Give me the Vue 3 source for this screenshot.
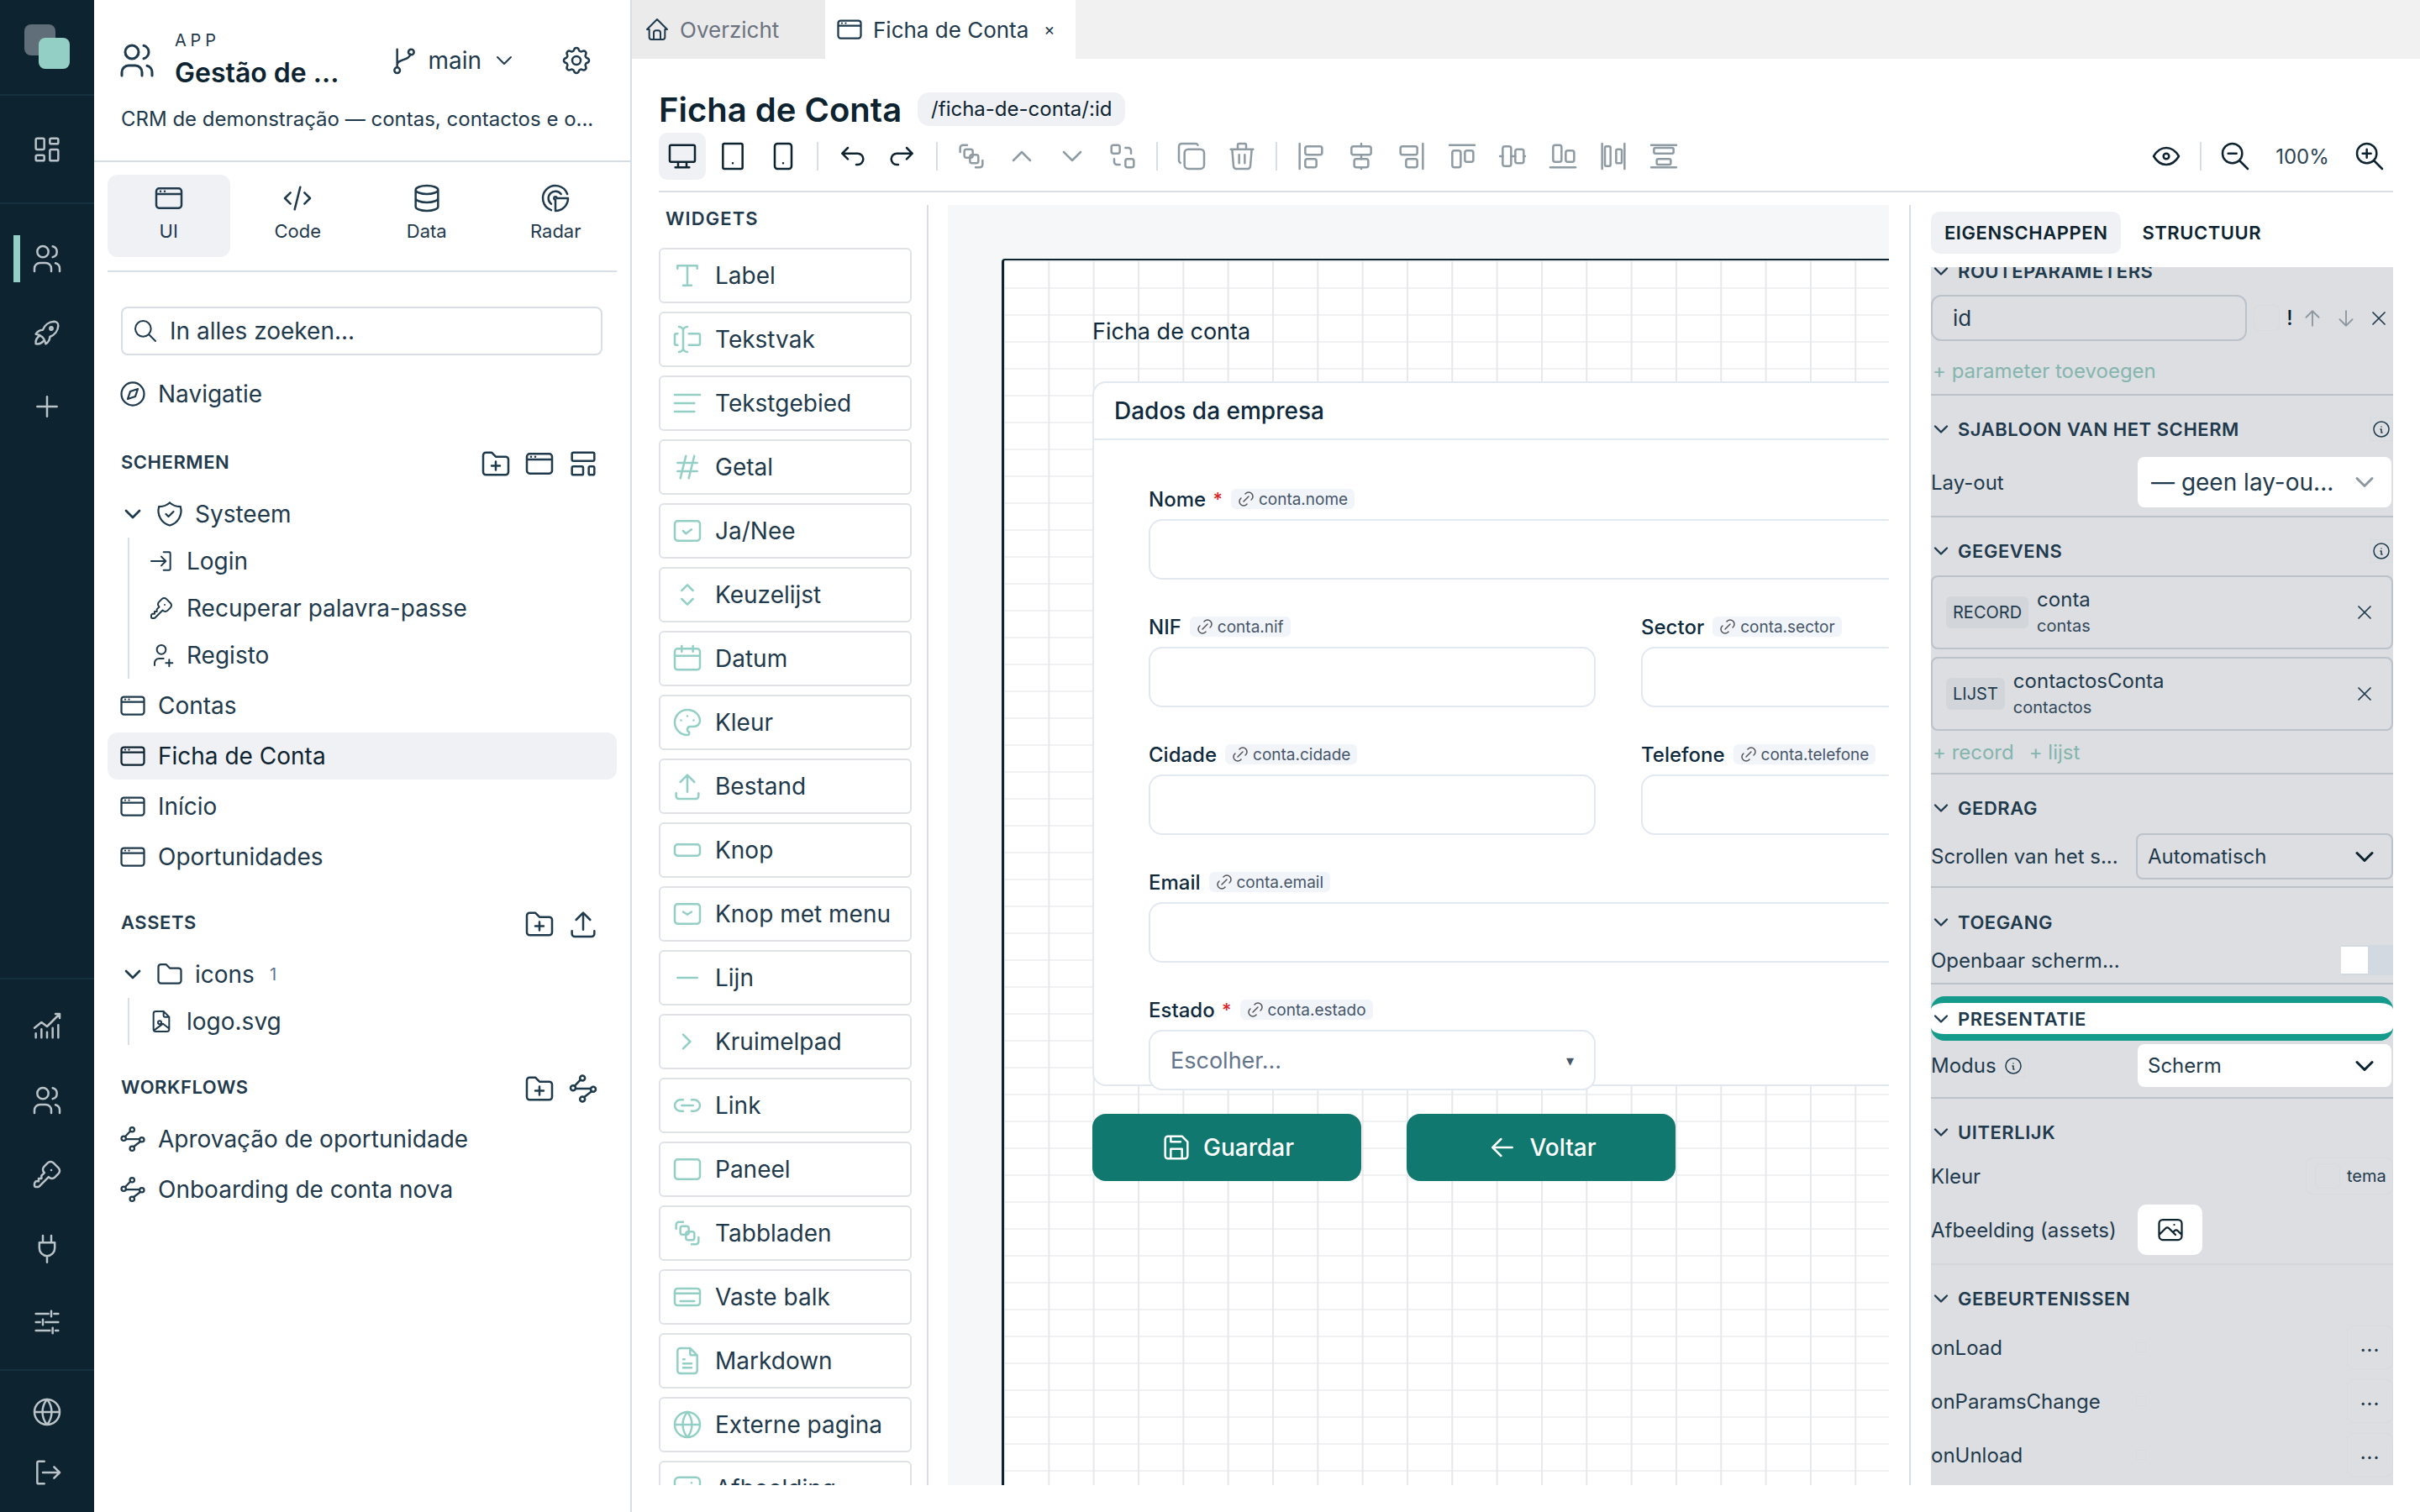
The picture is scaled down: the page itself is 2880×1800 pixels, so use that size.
<script setup>
import { h } from 'vue';

// inner markup of the icons, all on a 24x24 box
const icons = {
  dash: '<path d="M5 4h4a1 1 0 0 1 1 1v6a1 1 0 0 1-1 1H5a1 1 0 0 1-1-1V5a1 1 0 0 1 1-1M5 16h4a1 1 0 0 1 1 1v2a1 1 0 0 1-1 1H5a1 1 0 0 1-1-1v-2a1 1 0 0 1 1-1M15 12h4a1 1 0 0 1 1 1v6a1 1 0 0 1-1 1h-4a1 1 0 0 1-1-1v-6a1 1 0 0 1 1-1M15 4h4a1 1 0 0 1 1 1v2a1 1 0 0 1-1 1h-4a1 1 0 0 1-1-1V5a1 1 0 0 1 1-1"/>',
  users: '<path d="M5 7a4 4 0 1 0 8 0a4 4 0 1 0-8 0M3 21v-2a4 4 0 0 1 4-4h4a4 4 0 0 1 4 4v2M16 3.13a4 4 0 0 1 0 7.75M21 21v-2a4 4 0 0 0-3-3.85"/>',
  rocket: '<path d="M4 13a8 8 0 0 1 7 7a6 6 0 0 0 3-5a9 9 0 0 0 6-8a3 3 0 0 0-3-3a9 9 0 0 0-8 6a6 6 0 0 0-5 3M7 14a6 6 0 0 0-3 6a6 6 0 0 0 6-3M14 9a1 1 0 1 0 2 0a1 1 0 1 0-2 0"/>',
  plus: '<path d="M12 5v14M5 12h14"/>',
  chart: '<path d="M3 13l5-4 4 3 9-9M18 3h3v3M4 20v-3M8 20v-6M12 20v-4M16 20v-7M20 20v-9"/>',
  key: '<path d="M16.555 3.843l3.602 3.602a2.877 2.877 0 0 1 0 4.069l-2.643 2.643a2.877 2.877 0 0 1-4.069 0l-.301-.301l-6.558 6.558a2 2 0 0 1-1.239.578l-.175.008h-1.172a1 1 0 0 1-.993-.883l-.007-.117v-1.172a2 2 0 0 1 .467-1.284l.119-.13l.414-.414h2v-2h2v-2l2.144-2.144l-.301-.301a2.877 2.877 0 0 1 0-4.069l2.643-2.643a2.877 2.877 0 0 1 4.069 0M15 9h.01"/>',
  plug: '<path d="M9 3v5M15 3v5M6.5 8h11v4a5.5 5.5 0 0 1-11 0zM12 17.5V22"/>',
  sliders: '<path d="M4 6h9M17 6h3M15 4v4M4 12h3M11 12h9M9 10v4M4 18h10M18 18h2M16 16v4"/>',
  globe: '<path d="M3 12a9 9 0 1 0 18 0a9 9 0 1 0-18 0M3 12h18M12 3a14 14 0 0 0 0 18a14 14 0 0 0 0-18"/>',
  logout: '<path d="M10 4H6a1 1 0 0 0-1 1v14a1 1 0 0 0 1 1h4M9 12h12M17 8l4 4-4 4"/>',
  branch: '<path d="M5 19a2 2 0 1 0 4 0a2 2 0 1 0-4 0M15 6a2 2 0 1 0 4 0a2 2 0 1 0-4 0M7 17V4M7 15c0-4 9-3 9.4-7.5"/>',
  gear: '<path d="M10.325 4.317c.426-1.756 2.924-1.756 3.35 0a1.724 1.724 0 0 0 2.573 1.066c1.543-.94 3.31.826 2.37 2.37a1.724 1.724 0 0 0 1.065 2.572c1.756.426 1.756 2.924 0 3.35a1.724 1.724 0 0 0-1.066 2.573c.94 1.543-.826 3.31-2.37 2.37a1.724 1.724 0 0 0-2.572 1.065c-.426 1.756-2.924 1.756-3.35 0a1.724 1.724 0 0 0-2.573-1.066c-1.543.94-3.31-.826-2.37-2.37a1.724 1.724 0 0 0-1.065-2.572c-1.756-.426-1.756-2.924 0-3.35a1.724 1.724 0 0 0 1.066-2.573c-.94-1.543.826-3.31 2.37-2.37c1 .608 2.296.07 2.572-1.065zM9 12a3 3 0 1 0 6 0a3 3 0 0 0-6 0"/>',
  win: '<path d="M3 7a2 2 0 0 1 2-2h14a2 2 0 0 1 2 2v10a2 2 0 0 1-2 2H5a2 2 0 0 1-2-2zM3 9h18M6 7h.01M9 7h.01"/>',
  code: '<path d="M7 8l-4 4 4 4M17 8l4 4-4 4M14 4l-4 16"/>',
  data: '<path d="M4 6a8 3 0 1 0 16 0a8 3 0 1 0-16 0M4 6v6a8 3 0 0 0 16 0V6M4 12v6a8 3 0 0 0 16 0v-6"/>',
  radar: '<path d="M21 12h-8a1 1 0 1 0-1 1v8a9 9 0 0 0 9-9M16 9a5 5 0 1 0-7 7M20.486 9a9 9 0 1 0-11.482 11.495"/>',
  search: '<path d="M3 10a7 7 0 1 0 14 0a7 7 0 1 0-14 0M21 21l-6-6"/>',
  compass: '<path d="M8 16l2-6 6-2-2 6zM3 12a9 9 0 1 0 18 0a9 9 0 1 0-18 0"/>',
  folderPlus: '<path d="M5 4h4l3 3h7a2 2 0 0 1 2 2v9a2 2 0 0 1-2 2H5a2 2 0 0 1-2-2V6a2 2 0 0 1 2-2M12 10.5v6M9 13.5h6"/>',
  layout: '<path d="M5 4h14a1 1 0 0 1 1 1v4a1 1 0 0 1-1 1H5a1 1 0 0 1-1-1V5a1 1 0 0 1 1-1M5 14h6a1 1 0 0 1 1 1v4a1 1 0 0 1-1 1H5a1 1 0 0 1-1-1v-4a1 1 0 0 1 1-1M17 14h2a1 1 0 0 1 1 1v4a1 1 0 0 1-1 1h-2a1 1 0 0 1-1-1v-4a1 1 0 0 1 1-1"/>',
  down: '<path d="M6 9l6 6 6-6"/>',
  up: '<path d="M6 15l6-6 6 6"/>',
  right: '<path d="M9 7l5 5-5 5"/>',
  shield: '<path d="M12 3a12 12 0 0 0 8.5 3a12 12 0 0 1-8.5 15a12 12 0 0 1-8.5-15a12 12 0 0 0 8.5-3M9 12l2 2 4-4"/>',
  login: '<path d="M3 12h13M12 8l4 4-4 4M14 4h5a1 1 0 0 1 1 1v14a1 1 0 0 1-1 1h-5"/>',
  userPlus: '<path d="M8 7a4 4 0 1 0 8 0a4 4 0 0 0-8 0M16 19h6M19 16v6M6 21v-2a4 4 0 0 1 4-4h4"/>',
  folder: '<path d="M5 4h4l3 3h7a2 2 0 0 1 2 2v8a2 2 0 0 1-2 2H5a2 2 0 0 1-2-2V6a2 2 0 0 1 2-2"/>',
  upload: '<path d="M4 17v2a2 2 0 0 0 2 2h12a2 2 0 0 0 2-2v-2M7 9l5-5 5 5M12 4v12"/>',
  fileImg: '<path d="M14 3v4a1 1 0 0 0 1 1h4M17 21H7a2 2 0 0 1-2-2V5a2 2 0 0 1 2-2h7l5 5v11a2 2 0 0 1-2 2M9 13a1.5 1.5 0 1 0 3 0a1.5 1.5 0 1 0-3 0M5.5 20l8-6 5 4"/>',
  flow: '<circle cx="11.500" cy="4.500" r="1.800"/><circle cx="4.800" cy="11.500" r="1.800"/><circle cx="19.200" cy="12.500" r="1.800"/><circle cx="11.500" cy="19.500" r="1.800"/><path d="M10 5.800L6 10M6.600 12h10.800M18 14l-5.200 4"/>',
  home: '<path d="M5 12H3l9-9 9 9h-2M5 12v7a2 2 0 0 0 2 2h10a2 2 0 0 0 2-2v-7M9 21v-6a2 2 0 0 1 2-2h2a2 2 0 0 1 2 2v6"/>',
  desktop: '<path d="M3 5a1 1 0 0 1 1-1h16a1 1 0 0 1 1 1v10a1 1 0 0 1-1 1H4a1 1 0 0 1-1-1zM7 20h10M9 16v4M15 16v4"/>',
  tablet: '<path d="M5 4a1 1 0 0 1 1-1h12a1 1 0 0 1 1 1v16a1 1 0 0 1-1 1H6a1 1 0 0 1-1-1zM12 17h.01"/>',
  phone: '<path d="M6 5a2 2 0 0 1 2-2h8a2 2 0 0 1 2 2v14a2 2 0 0 1-2 2H8a2 2 0 0 1-2-2zM12 17h.01"/>',
  undo: '<path d="M9 14l-4-4 4-4M5 10h11a4 4 0 1 1 0 8h-1"/>',
  redo: '<path d="M15 14l4-4-4-4M19 10H8a4 4 0 1 0 0 8h1"/>',
  group: '<path d="M4 9V6a2 2 0 0 1 2-2h3M20 15v3a2 2 0 0 1-2 2h-3"/><rect x="7" y="7" width="6" height="6" rx="1.500"/><rect x="11" y="11" width="6" height="6" rx="1.500"/>',
  ungroup: '<rect x="4" y="4" width="6" height="6" rx="1.500"/><rect x="14" y="14" width="6" height="6" rx="1.500"/><path d="M14 6h2a2 2 0 0 1 2 2v2M10 18H8a2 2 0 0 1-2-2v-2"/>',
  copy: '<path d="M7 9.667A2.667 2.667 0 0 1 9.667 7h8.666A2.667 2.667 0 0 1 21 9.667v8.666A2.667 2.667 0 0 1 18.333 21H9.667A2.667 2.667 0 0 1 7 18.333zM4.012 16.737A2.005 2.005 0 0 1 3 15V5c0-1.100.9-2 2-2h10c.75 0 1.158.385 1.500 1"/>',
  trash: '<path d="M4 7h16M10 11v6M14 11v6M5 7l1 12a2 2 0 0 0 2 2h8a2 2 0 0 0 2-2l1-12M9 7V4a1 1 0 0 1 1-1h4a1 1 0 0 1 1 1v3"/>',
  alL: '<path d="M4 3v18"/><rect x="8" y="5" width="12" height="6" rx="1.500"/><rect x="8" y="14" width="8" height="6" rx="1.500"/>',
  alC: '<path d="M12 3v2M12 11v3M12 20v1"/><rect x="5" y="5" width="14" height="6" rx="1.500"/><rect x="7" y="14" width="10" height="6" rx="1.500"/>',
  alR: '<path d="M20 3v18"/><rect x="4" y="5" width="12" height="6" rx="1.500"/><rect x="8" y="14" width="8" height="6" rx="1.500"/>',
  alT: '<path d="M3 4h18"/><rect x="5" y="8" width="6" height="12" rx="1.500"/><rect x="14" y="8" width="6" height="8" rx="1.500"/>',
  alM: '<path d="M3 12h2M11 12h3M20 12h1"/><rect x="5" y="5" width="6" height="14" rx="1.500"/><rect x="14" y="7" width="6" height="10" rx="1.500"/>',
  alB: '<path d="M3 20h18"/><rect x="5" y="4" width="6" height="12" rx="1.500"/><rect x="14" y="8" width="6" height="8" rx="1.500"/>',
  diH: '<path d="M4 3v18M20 3v18"/><rect x="6" y="5" width="4" height="14" rx="1"/><rect x="14" y="7" width="4" height="10" rx="1"/>',
  diV: '<path d="M3 4h18M3 20h18"/><rect x="5" y="6" width="14" height="4" rx="1"/><rect x="7" y="14" width="10" height="4" rx="1"/>',
  eye: '<path d="M10 12a2 2 0 1 0 4 0a2 2 0 0 0-4 0M21 12c-2.400 4-5.400 6-9 6s-6.600-2-9-6c2.400-4 5.400-6 9-6s6.600 2 9 6"/>',
  zoomOut: '<path d="M3 10a7 7 0 1 0 14 0a7 7 0 1 0-14 0M7 10h6M21 21l-6-6"/>',
  zoomIn: '<path d="M3 10a7 7 0 1 0 14 0a7 7 0 1 0-14 0M7 10h6M10 7v6M21 21l-6-6"/>',
  close: '<path d="M18 6L6 18M6 6l12 12"/>',
  arrowUp: '<path d="M12 5v14M18 11l-6-6M6 11l6-6"/>',
  arrowDown: '<path d="M12 5v14M18 13l-6 6M6 13l6 6"/>',
  arrowLeft: '<path d="M5 12h14M5 12l6 6M5 12l6-6"/>',
  info: '<path d="M3 12a9 9 0 1 0 18 0a9 9 0 0 0-18 0M12 9h.01M11 12h1v4h1"/>',
  image: '<path d="M15 8h.01M3 7a3 3 0 0 1 3-3h12a3 3 0 0 1 3 3v10a3 3 0 0 1-3 3H6a3 3 0 0 1-3-3zM3 16l5-5c.928-.893 2.072-.893 3 0l5 5M14 14l1-1c.928-.893 2.072-.893 3 0l3 3"/>',
  save: '<path d="M6 4h10l4 4v10a2 2 0 0 1-2 2H6a2 2 0 0 1-2-2V6a2 2 0 0 1 2-2M8 20v-7h8v7M8 4v4h7"/>',
  link: '<path d="M9 15l6-6M11 6l.463-.536a5 5 0 0 1 7.071 7.072l-.534.464M13 18l-.397.534a5.068 5.068 0 0 1-7.127 0a4.972 4.972 0 0 1 0-7.071l.524-.463"/>',
  tLabel: '<path d="M5 7V5h14v2M12 5v14M9 19h6"/>',
  tInput: '<path d="M12 3a3 3 0 0 0-3 3v12a3 3 0 0 0 3 3M6 3a3 3 0 0 1 3 3v12a3 3 0 0 1-3 3M13 8h7a1 1 0 0 1 1 1v6a1 1 0 0 1-1 1h-7M5 8H4a1 1 0 0 0-1 1v6a1 1 0 0 0 1 1h1"/>',
  tArea: '<path d="M3 6h18M3 12h14M3 18h14"/>',
  tHash: '<path d="M5 9h14M5 15h14M11 4L7 20M17 4l-4 16"/>',
  tCheck: '<rect x="3" y="5" width="18" height="14" rx="2"/><path d="M9 12l2 2 4-3"/>',
  tSelect: '<path d="M8 9l4-4 4 4M16 15l-4 4-4-4"/>',
  tDate: '<rect x="3" y="5" width="18" height="15" rx="2"/><path d="M3 10h18M8 3v4M16 3v4"/>',
  tColor: '<path d="M12 21a9 9 0 0 1 0-18c4.970 0 9 3.582 9 8c0 1.060-.474 2.078-1.318 2.828c-.844.750-1.989 1.172-3.182 1.172H14a2 2 0 0 0-1 3.750a1.300 1.300 0 0 1-1 2.250M7.500 10.500h.01M12 7.500h.01M16.500 10.500h.01"/>',
  tButton: '<rect x="3" y="8" width="18" height="8" rx="2"/>',
  tMenu: '<rect x="3" y="5" width="18" height="14" rx="2"/><path d="M9 10.500l3 2 3-2"/>',
  tLine: '<path d="M5 12h14"/>',
  tLink: '<path d="M9 8H7a4 4 0 0 0 0 8h2M15 8h2a4 4 0 0 1 0 8h-2M8 12h8"/>',
  tPanel: '<rect x="3" y="5" width="18" height="14" rx="2"/>',
  tBar: '<rect x="3" y="6" width="18" height="12" rx="2"/><path d="M3 9.500h18M7 15h10"/>',
  tFile: '<path d="M14 3v4a1 1 0 0 0 1 1h4M17 21H7a2 2 0 0 1-2-2V5a2 2 0 0 1 2-2h7l5 5v11a2 2 0 0 1-2 2zM9 11h1M9 14h6M9 17h6"/>',
};

// kleine helper: geen icon-bibliotheek beschikbaar
const Ic = (props) => h('svg', {
  width: props.s || 36,
  height: props.s || 36,
  viewBox: '0 0 24 24',
  fill: 'none',
  stroke: 'currentColor',
  'stroke-width': props.w || 1.5,
  'stroke-linecap': 'round',
  'stroke-linejoin': 'round',
  innerHTML: icons[props.n],
});
Ic.props = ['n', 's', 'w'];

const appTabs = [
  { label: 'UI', icon: 'win', active: true },
  { label: 'Code', icon: 'code' },
  { label: 'Data', icon: 'data' },
  { label: 'Radar', icon: 'radar' },
];
const systeem = [
  { label: 'Login', icon: 'login' },
  { label: 'Recuperar palavra-passe', icon: 'key' },
  { label: 'Registo', icon: 'userPlus' },
];
const schermen = [
  { label: 'Contas' },
  { label: 'Ficha de Conta', active: true },
  { label: 'Início' },
  { label: 'Oportunidades' },
];

const toolbar = [
  { n: 'desktop', active: true }, { n: 'tablet' }, { n: 'phone' }, 'sep',
  { n: 'undo' }, { n: 'redo' }, 'sep',
  { n: 'group', off: true }, { n: 'up', off: true }, { n: 'down', off: true }, { n: 'ungroup', off: true }, 'sep',
  { n: 'copy', off: true }, { n: 'trash', off: true }, 'sep',
  { n: 'alL', off: true }, { n: 'alC', off: true }, { n: 'alR', off: true }, { n: 'alT', off: true },
  { n: 'alM', off: true }, { n: 'alB', off: true }, { n: 'diH', off: true }, { n: 'diV', off: true },
];

const widgets = [
  ['Label', 'tLabel'], ['Tekstvak', 'tInput'], ['Tekstgebied', 'tArea'], ['Getal', 'tHash'],
  ['Ja/Nee', 'tCheck'], ['Keuzelijst', 'tSelect'], ['Datum', 'tDate'], ['Kleur', 'tColor'],
  ['Bestand', 'upload'], ['Knop', 'tButton'], ['Knop met menu', 'tMenu'], ['Lijn', 'tLine'],
  ['Kruimelpad', 'right'], ['Link', 'tLink'], ['Paneel', 'tPanel'], ['Tabbladen', 'group'],
  ['Vaste balk', 'tBar'], ['Markdown', 'tFile'], ['Externe pagina', 'globe'], ['Afbeelding', 'image'],
];

const eventos = ['onLoad', 'onParamsChange', 'onUnload'];
</script>

<template>
  <div class="app">
    <nav class="rail">
      <div class="logo-wrap">
        <div class="logo"><span class="logo-a"></span><span class="logo-b"></span></div>
      </div>
      <div class="rail-dash"><Ic n="dash" :s="40" /></div>
      <div class="rail-item on"><Ic n="users" :s="40" /></div>
      <div class="rail-item"><Ic n="rocket" :s="40" /></div>
      <div class="rail-item"><Ic n="plus" :s="40" /></div>
      <div class="rail-bottom">
        <div class="rail-item"><Ic n="chart" :s="40" /></div>
        <div class="rail-item"><Ic n="users" :s="40" /></div>
        <div class="rail-item"><Ic n="key" :s="40" /></div>
        <div class="rail-item"><Ic n="plug" :s="40" /></div>
        <div class="rail-item"><Ic n="sliders" :s="40" /></div>
      </div>
      <div class="rail-foot">
        <div class="rail-item"><Ic n="globe" :s="40" /></div>
        <div class="rail-item"><Ic n="logout" :s="40" /></div>
      </div>
    </nav>

    <aside class="panel">
      <div class="phead">
        <div class="phead-row">
          <Ic n="users" :s="48" />
          <div class="app-name">
            <div class="app-kicker">APP</div>
            <div class="app-title">Gestão de ...</div>
          </div>
          <div class="branch">
            <Ic n="branch" :s="40" />
            <span>main</span>
            <Ic class="branch-chev" n="down" :s="32" />
          </div>
          <Ic class="gear" n="gear" :s="40" />
        </div>
        <div class="app-desc">CRM de demonstração — contas, contactos e o...</div>
      </div>

      <div class="ptabs">
        <div v-for="t in appTabs" :key="t.label" class="ptab" :class="{ active: t.active }">
          <Ic :n="t.icon" :s="40" />
          <span>{{ t.label }}</span>
        </div>
      </div>

      <div class="search"><Ic n="search" :s="32" /><span>In alles zoeken...</span></div>

      <div class="row nav-row"><Ic n="compass" /><span>Navigatie</span></div>

      <div class="sec-title first">
        <span>SCHERMEN</span>
        <div class="sec-icons"><Ic n="folderPlus" :s="40" /><Ic n="win" :s="40" /><Ic n="layout" :s="40" /></div>
      </div>
      <div class="row"><Ic class="tree-chev" n="down" :s="32" :w="2" /><Ic class="ml" n="shield" /><span>Systeem</span></div>
      <div class="subtree">
        <div v-for="s in systeem" :key="s.label" class="row sub"><Ic :n="s.icon" :s="32" /><span>{{ s.label }}</span></div>
      </div>
      <div class="rows">
        <div v-for="s in schermen" :key="s.label" class="row" :class="{ active: s.active }"><Ic n="win" /><span>{{ s.label }}</span></div>
      </div>

      <div class="sec-title">
        <span>ASSETS</span>
        <div class="sec-icons"><Ic n="folderPlus" :s="40" /><Ic n="upload" :s="40" /></div>
      </div>
      <div class="row"><Ic class="tree-chev" n="down" :s="32" :w="2" /><Ic class="ml" n="folder" /><span>icons</span><small>1</small></div>
      <div class="subtree">
        <div class="row sub"><Ic n="fileImg" :s="32" /><span>logo.svg</span></div>
      </div>

      <div class="sec-title">
        <span>WORKFLOWS</span>
        <div class="sec-icons"><Ic n="folderPlus" :s="40" /><Ic n="flow" :s="40" /></div>
      </div>
      <div class="rows">
        <div class="row"><Ic n="flow" /><span>Aprovação de oportunidade</span></div>
        <div class="row"><Ic n="flow" /><span>Onboarding de conta nova</span></div>
      </div>
    </aside>

    <main class="main">
      <div class="tabstrip">
        <div class="tab"><Ic n="home" :s="32" /><span>Overzicht</span></div>
        <div class="tab current"><Ic n="win" /><span>Ficha de Conta</span><i>×</i></div>
      </div>

      <div class="content">
        <div class="title-row">
          <h1>Ficha de Conta</h1>
          <span class="route-pill">/ficha-de-conta/:id</span>
        </div>

        <div class="toolbar">
          <template v-for="(t, i) in toolbar" :key="i">
            <span v-if="t === 'sep'" class="tb-sep"></span>
            <span v-else class="tb-btn" :class="{ active: t.active, off: t.off }"><Ic :n="t.n" :s="40" /></span>
          </template>
          <span class="tb-btn push"><Ic n="eye" :s="40" /></span>
          <span class="tb-sep"></span>
          <span class="tb-btn"><Ic n="zoomOut" :s="40" /></span>
          <span class="tb-zoom">100%</span>
          <span class="tb-btn"><Ic n="zoomIn" :s="40" /></span>
        </div>

        <div class="work">
          <div class="widgets">
            <div class="widgets-title">WIDGETS</div>
            <div class="widget-list">
              <div v-for="w in widgets" :key="w[0]" class="widget">
                <Ic :n="w[1]" :s="40" />
                <span>{{ w[0] }}</span>
              </div>
            </div>
          </div>

          <div class="canvas">
            <div class="frame">
              <div class="page-title">Ficha de conta</div>
              <div class="card">
                <div class="card-head">Dados da empresa</div>
                <div class="form">
                  <div class="field wide">
                    <div class="flabel">Nome <b>*</b><span class="chip"><Ic n="link" :s="24" />conta.nome</span></div>
                    <div class="finput"></div>
                  </div>
                  <div class="field">
                    <div class="flabel">NIF<span class="chip"><Ic n="link" :s="24" />conta.nif</span></div>
                    <div class="finput"></div>
                  </div>
                  <div class="field">
                    <div class="flabel">Sector<span class="chip"><Ic n="link" :s="24" />conta.sector</span></div>
                    <div class="finput"></div>
                  </div>
                  <div class="field">
                    <div class="flabel">Cidade<span class="chip"><Ic n="link" :s="24" />conta.cidade</span></div>
                    <div class="finput"></div>
                  </div>
                  <div class="field">
                    <div class="flabel">Telefone<span class="chip"><Ic n="link" :s="24" />conta.telefone</span></div>
                    <div class="finput"></div>
                  </div>
                  <div class="field wide">
                    <div class="flabel">Email<span class="chip"><Ic n="link" :s="24" />conta.email</span></div>
                    <div class="finput"></div>
                  </div>
                  <div class="field">
                    <div class="flabel">Estado <b>*</b><span class="chip"><Ic n="link" :s="24" />conta.estado</span></div>
                    <div class="finput fselect"><span>Escolher...</span><em>▾</em></div>
                  </div>
                </div>
              </div>
              <div class="actions">
                <div class="btn"><Ic n="save" :s="40" /><span>Guardar</span></div>
                <div class="btn"><Ic n="arrowLeft" :s="40" /><span>Voltar</span></div>
              </div>
            </div>
          </div>

          <div class="props">
            <div class="props-tabs">
              <span class="ptb active">EIGENSCHAPPEN</span>
              <span class="ptb">STRUCTUUR</span>
            </div>
            <div class="props-scroll">
              <section class="sec s-route">
                <div class="sec-head"><Ic n="down" :s="28" :w="2" /><span>ROUTEPARAMETERS</span></div>
                <div class="param">
                  <div class="param-input">id</div>
                  <span class="param-box"></span>
                  <span class="bang">!</span>
                  <Ic class="dim" n="arrowUp" :s="30" />
                  <Ic class="dim" n="arrowDown" :s="30" />
                  <Ic n="close" :s="28" />
                </div>
                <div class="add add-param"><span>+ parameter toevoegen</span></div>
              </section>

              <section class="sec s-tpl">
                <div class="sec-head"><Ic n="down" :s="28" :w="2" /><span>SJABLOON VAN HET SCHERM</span><span class="info-box"><Ic n="info" :s="24" /></span></div>
                <div class="prow h60">
                  <label>Lay-out</label>
                  <div class="pselect big"><span>— geen lay-ou...</span><Ic class="dim" n="down" :s="36" :w="2" /></div>
                </div>
              </section>

              <section class="sec s-data">
                <div class="sec-head"><Ic n="down" :s="28" :w="2" /><span>GEGEVENS</span><span class="info-box"><Ic n="info" :s="24" /></span></div>
                <div class="dcard">
                  <span class="dbadge">RECORD</span>
                  <div class="dtext"><div>conta</div><small>contas</small></div>
                  <Ic n="close" :s="28" />
                </div>
                <div class="dcard">
                  <span class="dbadge">LIJST</span>
                  <div class="dtext"><div>contactosConta</div><small>contactos</small></div>
                  <Ic n="close" :s="28" />
                </div>
                <div class="add add-data"><span>+ record</span><span>+ lijst</span></div>
              </section>

              <section class="sec s-behav">
                <div class="sec-head"><Ic n="down" :s="28" :w="2" /><span>GEDRAG</span></div>
                <div class="prow h55">
                  <label>Scrollen van het s...</label>
                  <div class="pselect bordered"><span>Automatisch</span><Ic n="down" :s="36" :w="2" /></div>
                </div>
              </section>

              <section class="sec s-access">
                <div class="sec-head"><Ic n="down" :s="28" :w="2" /><span>TOEGANG</span></div>
                <div class="prow h36">
                  <label>Openbaar scherm...</label>
                  <div class="toggle"><span></span></div>
                </div>
              </section>

              <section class="sec s-pres">
                <div class="sec-head focus"><Ic n="down" :s="28" :w="2" /><span>PRESENTATIE</span></div>
                <div class="prow h51">
                  <label>Modus <span class="info-box inline"><Ic n="info" :s="24" /></span></label>
                  <div class="pselect"><span>Scherm</span><Ic n="down" :s="36" :w="2" /></div>
                </div>
              </section>

              <section class="sec s-look">
                <div class="sec-head"><Ic n="down" :s="28" :w="2" /><span>UITERLIJK</span></div>
                <div class="prow h44">
                  <label>Kleur</label>
                  <div class="color"><span></span><em>tema</em></div>
                </div>
                <div class="prow h60 mt12">
                  <label class="fixed">Afbeelding (assets)</label>
                  <div class="img-btn"><Ic n="image" :s="36" /></div>
                </div>
              </section>

              <section class="sec s-events">
                <div class="sec-head"><Ic n="down" :s="28" :w="2" /><span>GEBEURTENISSEN</span></div>
                <div v-for="e in eventos" :key="e" class="prow event">
                  <label>{{ e }}</label>
                  <span class="ev-dot"></span>
                  <span class="ev-more">...</span>
                </div>
              </section>
            </div>
          </div>
        </div>
      </div>
    </main>
  </div>
</template>

<style>
html, body { margin: 0; background: #fff; }
</style>

<style scoped>
* { box-sizing: border-box; }

.app {
  display: flex;
  width: 2880px;
  height: 1800px;
  overflow: hidden;
  font-family: Inter, "Noto Sans", sans-serif;
  color: #1f3a4c;
  background: #fff;
}

/* rail */
.rail {
  width: 112px;
  flex-shrink: 0;
  background: #0d2330;
  color: #b9c3c8;
  display: flex;
  flex-direction: column;
}
.logo-wrap { height: 114px; padding: 29px 0 0 29px; border-bottom: 2px solid #15303f; }
.logo { position: relative; width: 53px; height: 53px; }
.logo-a { position: absolute; left: 0; top: 0; width: 37px; height: 37px; border-radius: 8px; background: #5f6e78; }
.logo-b { position: absolute; left: 17px; top: 16px; width: 37px; height: 37px; border-radius: 8px; background: #94cfc6; }
.rail-dash { height: 129px; border-bottom: 2px solid #15303f; display: flex; align-items: center; justify-content: center; }
.rail-item { position: relative; height: 88px; display: flex; align-items: center; justify-content: center; flex-shrink: 0; }
.rail-dash + .rail-item { margin-top: 21px; }
.rail-item.on::before { content: ""; position: absolute; left: 16px; top: 16px; width: 8px; height: 56px; background: #94cfc6; }
.rail-bottom { margin-top: auto; border-top: 2px solid #15303f; padding-top: 12px; height: 466px; }
.rail-foot { height: 170px; border-top: 2px solid #15303f; padding-top: 13px; }
.rail-foot .rail-item { height: 72px; }

/* side panel */
.panel { width: 640px; flex-shrink: 0; border-right: 2px solid #d8dee6; }
.phead { height: 193px; border-bottom: 2px solid #d8dee6; padding-top: 32px; }
.phead-row { display: flex; align-items: center; height: 80px; padding-left: 27px; }
.app-name { margin: 2px 0 0 21px; }
.app-kicker { font-size: 20px; line-height: 28px; letter-spacing: 0.24em; }
.app-title { font-size: 32px; line-height: 50px; font-weight: 600; color: #0d2330; }
.branch { margin-left: auto; display: flex; align-items: center; gap: 8px; font-size: 28px; }
.branch-chev { margin-left: 3px; }
.gear { margin: 0 44px 0 50px; }
.app-desc { margin: 12px 0 0 32px; font-size: 24px; line-height: 36px; white-space: nowrap; }
.ptabs { display: flex; gap: 8px; margin: 15px 16px 0; padding-bottom: 16px; border-bottom: 2px solid #d8dee6; }
.ptab { flex: 1; height: 98px; padding-top: 8px; border-radius: 12px; display: flex; flex-direction: column; align-items: center; gap: 6px; font-size: 22px; }
.ptab.active { background: #f0f1f5; }
.search { display: flex; align-items: center; gap: 13px; height: 58px; margin: 41px 33px 0 32px; padding-left: 11px; border: 2px solid #d8dee6; border-radius: 8px; font-size: 28px; }
.row { display: flex; align-items: center; gap: 12px; height: 56px; padding-left: 12px; font-size: 28px; border-radius: 12px; margin: 0 16px; white-space: nowrap; }
.row.active { background: #f0f1f5; color: #0d2330; }
.row small { font-size: 20px; color: #64748b; margin-left: 6px; }
.row .tree-chev { margin-left: 2px; }
.row .ml { margin-left: -2px; }
.nav-row { margin-top: 18px; }
.rows { display: flex; flex-direction: column; gap: 4px; }
.sec-title { display: flex; align-items: center; justify-content: space-between; height: 40px; margin: 30px 36px 14px 32px; font-size: 22px; font-weight: 600; letter-spacing: 0.55px; }
.sec-title.first { margin-top: 33px; }
.sec-icons { display: flex; gap: 12px; padding-top: 4px; }
.subtree { margin: 0 0 4px 40px; border-left: 2px solid #d8dee6; }
.row.sub { margin: 0; padding-left: 22px; gap: 14px; }

/* main */
.main { flex: 1; min-width: 0; display: flex; flex-direction: column; }
.tabstrip { display: flex; height: 70px; flex-shrink: 0; background: #f1f1f1; font-size: 26px; }
.tab { display: flex; align-items: center; gap: 11px; width: 230px; padding-left: 14px; background: #ebebeb; color: #6b7280; }
.tab svg { color: #1f3a4c; }
.tab.current { width: 298px; padding-left: 11px; gap: 10px; background: #fff; color: #1f3a4c; }
.tab i { font-style: normal; font-size: 20px; margin-left: 8px; }
.content { flex: 1; padding: 0 32px; min-height: 0; display: flex; flex-direction: column; }
.title-row { display: flex; align-items: center; gap: 19px; margin-top: 35px; height: 50px; }
h1 { margin: 0; font-size: 40px; font-weight: 600; color: #0d2330; }
.route-pill { height: 40px; line-height: 40px; padding: 0 16px; border-radius: 14px; background: #f0f1f5; font-size: 24px; color: #0d2330; }
.toolbar { display: flex; align-items: center; gap: 4px; margin-top: 3px; padding-bottom: 13px; border-bottom: 2px solid #d8dee6; }
.tb-btn { width: 56px; height: 56px; border-radius: 10px; display: flex; align-items: center; justify-content: center; color: #0d2330; flex-shrink: 0; }
.tb-btn.active { background: #f0f1f5; }
.tb-btn.off { color: #8f9ba3; }
.tb-btn.push { margin-left: auto; }
.tb-sep { width: 2px; height: 34px; margin: 0 8px; background: #d8dee6; }
.tb-zoom { width: 96px; text-align: center; font-size: 24px; color: #2b4353; }

.work { display: flex; height: 1524px; margin-top: 15px; }

.widgets { width: 321px; flex-shrink: 0; height: 100%; border-right: 2px solid #d8dee6; overflow: hidden; }
.widgets-title { height: 32px; line-height: 32px; margin: 0 0 19px 8px; font-size: 22px; font-weight: 600; letter-spacing: 0.05em; }
.widget-list { display: flex; flex-direction: column; gap: 10px; width: 301px; }
.widget { display: flex; align-items: center; gap: 13px; height: 66px; padding-left: 12px; border: 2px solid #dfe3e8; border-radius: 6px; font-size: 28px; flex-shrink: 0; }
.widget svg { color: #94cfc6; flex-shrink: 0; }

.canvas { width: 1120px; flex-shrink: 0; margin-left: 23px; height: 100%; background: #f6f7f9; overflow: hidden; padding: 64px 0 0 64px; }
.frame {
  width: 1600px;
  height: 1600px;
  border-top: 2px solid #0d2330;
  border-left: 3px solid #0d2330;
  border-top-left-radius: 4px;
  padding: 65px 0 0 105px;
  background-color: #fff;
  background-image:
    linear-gradient(to right, transparent calc(100% - 2px), #e6e8ec calc(100% - 2px)),
    linear-gradient(to bottom, transparent calc(100% - 2px), #f0f1f3 calc(100% - 2px));
  background-size: 53.333px 32px;
  background-position: 1px 2px;
}
.page-title { height: 40px; line-height: 40px; font-size: 27px; color: #0f2a3d; }
.card { width: 1300px; height: 839px; margin-top: 39px; background: #fff; border: 2px solid #e2e8f0; border-radius: 16px; }
.card-head { height: 68px; padding-left: 24px; line-height: 66px; font-size: 28px; font-weight: 500; color: #0f2a3d; border-bottom: 2px solid #e2e8f0; }
.form { display: grid; grid-template-columns: 532px 532px; column-gap: 54px; row-gap: 40px; padding: 54px 0 0 65px; }
.field.wide { grid-column: 1 / 3; }
.flabel { display: flex; align-items: center; height: 32px; margin-bottom: 8px; font-size: 24px; font-weight: 500; color: #0f2a3d; white-space: pre; }
.flabel b { color: #dc2626; font-weight: 500; font-size: 22px; margin-left: 2px; }
.chip { display: inline-flex; align-items: center; gap: 3px; height: 24px; margin-left: 10px; padding: 0 8px 0 6px; border-radius: 6px; background: #f1f5f9; font-size: 19px; font-weight: 400; color: #475569; }
.chip svg { color: #52525b; }
.finput { height: 72px; background: #fff; border: 2px solid #e2e8f0; border-radius: 16px; }
.fselect { display: flex; align-items: center; justify-content: space-between; padding: 0 24px; font-size: 27px; color: #64748b; }
.fselect em { font-style: normal; font-size: 18px; color: #475569; }
.actions { display: flex; gap: 54px; margin-top: 33px; }
.btn { width: 320px; height: 80px; border-radius: 16px; background: #11786f; color: #fff; display: flex; align-items: center; justify-content: center; gap: 12px; font-size: 28px; font-weight: 500; }

/* eigenschappen */
.props { width: 576px; flex-shrink: 0; margin-left: 24px; height: 100%; border-left: 2px solid #d8dee6; padding: 8px 0 0 24px; }
.props-tabs { display: flex; gap: 9px; height: 50px; }
.ptb { display: flex; align-items: center; padding: 0 16px; border-radius: 10px; font-size: 22px; font-weight: 600; letter-spacing: 0.55px; color: #0d2330; }
.ptb.active { background: #f0f1f5; }
.props-scroll { width: 550px; height: 1450px; margin-top: 16px; background: #dcdee2; overflow: hidden; }
.sec { border-bottom: 2px solid #bcc2c9; }
.sec-head { display: flex; align-items: center; gap: 6px; height: 40px; font-size: 22px; font-weight: 600; letter-spacing: 0.55px; white-space: nowrap; }
.sec-head > svg { margin-left: -2px; }
.info-box { display: inline-flex; align-items: center; justify-content: center; width: 28px; height: 28px; margin-left: auto; margin-right: 0; border: 1px solid #d6dbe0; }
.info-box.inline { margin: 0 0 0 6px; vertical-align: middle; }
.dim { color: #8d98a1; }

.s-route { margin-top: -15px; padding-bottom: 10px; }
.param { display: flex; align-items: center; margin-top: 8px; height: 55px; }
.param-input { width: 376px; height: 55px; line-height: 51px; padding-left: 24px; border: 2px solid #bcc2c9; border-radius: 12px; font-size: 26px; }
.param-box { width: 31px; height: 31px; margin-left: 8px; border: 1px solid #d6dbe0; border-radius: 6px; }
.bang { width: 24px; text-align: center; font-size: 24px; font-weight: 500; color: #0d2330; }
.param svg { margin-left: 10px; }
.param .bang + svg { margin-left: 0; }
.add { display: flex; align-items: center; gap: 18px; height: 36px; font-size: 24px; color: #84b5ae; padding-left: 2px; }
.add-param { margin-top: 17px; }
.add-data { margin-top: 7px; }

.s-tpl { padding: 20px 0 10px; }
.s-tpl .prow { margin-top: 13px; }
.s-data { padding: 20px 0 7px; }
.s-behav { padding: 20px 0 8px; }
.s-behav .prow { margin-top: 10px; }
.s-access { padding: 21px 0 9px; }
.s-access .prow { margin-top: 7px; }
.s-pres { padding: 14px 0 12px; }
.s-pres .prow { margin-top: 4px; }
.s-look { padding: 20px 0 10px; border-bottom-color: #d3d6da; }
.s-look .prow { margin-top: 10px; }
.s-look .prow.mt12 { margin-top: 12px; }
.s-events { padding: 20px 0 0; border: 0; }
.s-events .prow { margin-top: 12px; }

.prow { display: flex; align-items: center; font-size: 24px; white-space: nowrap; }
.prow label { display: flex; align-items: center; }
.prow label.fixed { width: 246px; }
.h60 { height: 60px; }
.h55 { height: 55px; }
.h51 { height: 51px; }
.h44 { height: 44px; }
.h36 { height: 36px; }
.pselect { display: flex; align-items: center; justify-content: space-between; width: 302px; height: 100%; margin-left: auto; margin-right: 2px; padding: 0 14px 0 12px; background: #fff; border-radius: 8px; font-size: 24px; color: #1f3a4c; }
.pselect svg { color: #0d2330; }
.pselect svg.dim { color: #8d98a1; }
.pselect.big { font-size: 28px; padding-left: 16px; }
.pselect.bordered { width: 306px; margin-right: 0; padding-left: 12px; background: transparent; border: 2px solid #bcc2c9; }
.toggle { width: 62px; height: 36px; margin-left: auto; background: #d3d9e0; }
.toggle span { display: block; width: 32px; height: 32px; margin-top: 2px; background: #fff; }
.sec-head.focus { height: 53px; background: #fff; border: 8px solid #159b8c; border-left: 0; border-right: 0; border-radius: 16px; }
.color { display: flex; align-items: center; gap: 8px; width: 104px; height: 44px; margin-left: auto; padding-left: 10px; border: 1px solid #d6dbe0; border-radius: 8px; }
.color span { width: 30px; height: 30px; border: 1px solid #d6dbe0; border-radius: 6px; flex-shrink: 0; }
.color em { font-style: normal; font-size: 20px; }
.img-btn { width: 77px; height: 60px; background: #fff; border-radius: 10px; color: #0d2330; display: flex; align-items: center; justify-content: center; }

.dcard { display: flex; align-items: center; gap: 10px; height: 88px; margin-top: 9px; padding: 0 18px 0 16px; border: 2px solid #bcc2c9; border-radius: 8px; }
.dbadge { height: 38px; line-height: 38px; padding: 0 8px; background: #d2d5da; border-radius: 6px; font-size: 20px; }
.dtext { flex: 1; font-size: 24px; line-height: 32px; }
.dtext small { display: block; font-size: 20px; line-height: 30px; color: #33495a; }

.event { height: 52px; position: relative; }
.ev-dot { position: absolute; left: 244px; top: 20px; width: 12px; height: 12px; border: 1px solid #d6dbe0; }
.ev-more { width: 55px; height: 52px; margin-left: auto; line-height: 44px; text-align: center; border: 1px solid #d6dbe0; border-radius: 8px; font-size: 24px; letter-spacing: 1px; }
</style>
